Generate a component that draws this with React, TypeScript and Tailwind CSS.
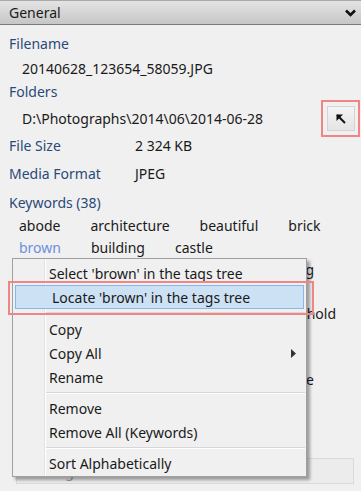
import React from "react";

const font = { fontFamily: '"Segoe UI", "Noto Sans", "Open Sans", sans-serif' };

function Sep({ h }: { h: string }) {
  return (
    <div className={"flex items-center pl-[32px] pr-[1px] " + h}>
      <div className="h-[2px] w-full border-t border-[#d7d7d7] border-b border-b-white" />
    </div>
  );
}

function Item({ label, highlight, arrow }: { label: string; highlight?: boolean; arrow?: boolean }) {
  return (
    <div
      className={
        "relative flex h-[24px] items-center pl-[36px] pr-[12px] " +
        (highlight ? "bg-[#cde1f5] border border-[#86b6ea] mx-[2px] pl-[34px]" : "")
      }
    >
      <span className="text-[14px] text-[#1a1a1a]">{label}</span>
      {arrow && (
        <svg className="absolute right-[10px] top-[8px]" width="5" height="9" viewBox="0 0 5 9">
          <path d="M0 0 L5 4.5 L0 9 Z" fill="#333" />
        </svg>
      )}
    </div>
  );
}

type Row = { words: string[]; width?: string };

const rows: Row[] = [
  { words: ["abode", "architecture", "beautiful", "brick"] },
  { words: ["brown", "building", "castle"] },
  { words: ["city", "construction", "dwelling"], width: "w-[295px]" },
  { words: ["europe", "facade", "heritage"] },
  { words: ["historic", "history", "household"], width: "w-[317px]" },
  { words: ["landmark", "medieval", "old"] },
  { words: ["outdoor", "residence", "roof"] },
  { words: ["sky", "stone", "house"], width: "w-[295px]" },
  { words: ["tourism", "tower", "travel"] },
  { words: ["wall", "window"] },
];

export default function App() {
  return (
    <div className="relative h-[491px] w-[361px] overflow-hidden bg-[#f0f0f0]" style={font}>
      {/* header */}
      <div className="flex h-[25px] items-center justify-between border-t border-t-[#a9a9a9] border-b border-b-[#7a7a7a] bg-gradient-to-b from-[#e4e4e4] to-[#c6c6c6] pl-[9px] pr-[5px]">
        <span className="text-[14px] text-[#1a1a1a]">General</span>
        <svg width="11" height="8" viewBox="0 0 11 8">
          <path d="M1 1.5 L5.5 6 L10 1.5" stroke="#111" strokeWidth="2.6" fill="none" />
        </svg>
      </div>

      <div className="flex flex-col pl-[9px] pr-[6px] text-[14px]">
        <div className="mt-[8px] h-[22px] leading-[22px] text-[#2b4a78]">Filename</div>
        <div className="mt-[3px] h-[23px] pl-[13px] leading-[22px] text-[#1a1a1a]">20140628_123654_58059.JPG</div>
        <div className="h-[22px] leading-[22px] text-[#2b4a78]">Folders</div>
        <div className="-mt-[3px] flex h-[37px] items-center justify-between">
          <span className="pl-[13px] text-[#1a1a1a]">D:\Photographs\2014\06\2014-06-28</span>
          <div className="-mr-[5px] flex h-[37px] w-[39px] items-center justify-center border-2 border-[#f08585]">
            <div className="flex h-[25px] w-[28px] items-center justify-center border border-[#d4d4d4] bg-gradient-to-b from-[#f4f4f4] to-[#e4e4e4]">
              <svg width="12" height="12" viewBox="0 0 12 12">
                <path d="M2 2 L10 10" stroke="#111" strokeWidth="2" />
                <path d="M1.5 1.5 L8 1.5 L1.5 8 Z" fill="#111" />
              </svg>
            </div>
          </div>
        </div>
        <div className="-mt-[2px] flex h-[22px] leading-[22px]">
          <span className="w-[126px] text-[#2b4a78]">File Size</span>
          <span className="text-[#1a1a1a]">2 324 KB</span>
        </div>
        <div className="mt-[6px] flex h-[22px] leading-[22px]">
          <span className="w-[126px] text-[#2b4a78]">Media Format</span>
          <span className="text-[#1a1a1a]">JPEG</span>
        </div>
        <div className="mt-[7px] h-[22px] leading-[22px] text-[#2b4a78]">Keywords (38)</div>
        <div className="flex flex-col pl-[10px]">
          {rows.map((r, i) => (
            <div key={i} className={"flex h-[22px] items-center gap-[30px] " + (r.width ?? "")}>
              {r.words.map((w, j) => (
                <span
                  key={w}
                  className={
                    (w === "brown" ? "text-[#6b8fdf]" : "text-[#1a1a1a]") +
                    (r.width && j === r.words.length - 1 ? " ml-auto" : "")
                  }
                >
                  {w}
                </span>
              ))}
            </div>
          ))}
        </div>
        <div className="mt-[24px] ml-[7px] mr-[1px] flex h-[26px] items-center border border-[#dadada] bg-[#ececec] px-[4px] text-[#9a9a9a]">
          Add Tag...
        </div>
      </div>

      {/* context menu */}
      <div className="absolute left-[12px] top-[258px] w-[295px] border border-[#a0a0a0] bg-[#f0f0f0] pt-[2px] pb-[1px] shadow-[3px_3px_3px_rgba(0,0,0,0.35)]">
        <div className="absolute bottom-0 left-[31px] top-0 w-[2px] border-l border-[#e2e2e2] border-r border-r-white" />
        <Item label="Select 'brown' in the tags tree" />
        <Item label="Locate 'brown' in the tags tree" highlight />
        <Sep h="h-[8px]" />
        <Item label="Copy" />
        <Item label="Copy All" arrow />
        <Item label="Rename" />
        <Sep h="h-[7px]" />
        <Item label="Remove" />
        <Item label="Remove All (Keywords)" />
        <Sep h="h-[7px]" />
        <Item label="Sort Alphabetically" />
      </div>
      <div className="pointer-events-none absolute left-[8px] top-[281px] h-[34px] w-[306px] border-2 border-[#f08585]" />
    </div>
  );
}
